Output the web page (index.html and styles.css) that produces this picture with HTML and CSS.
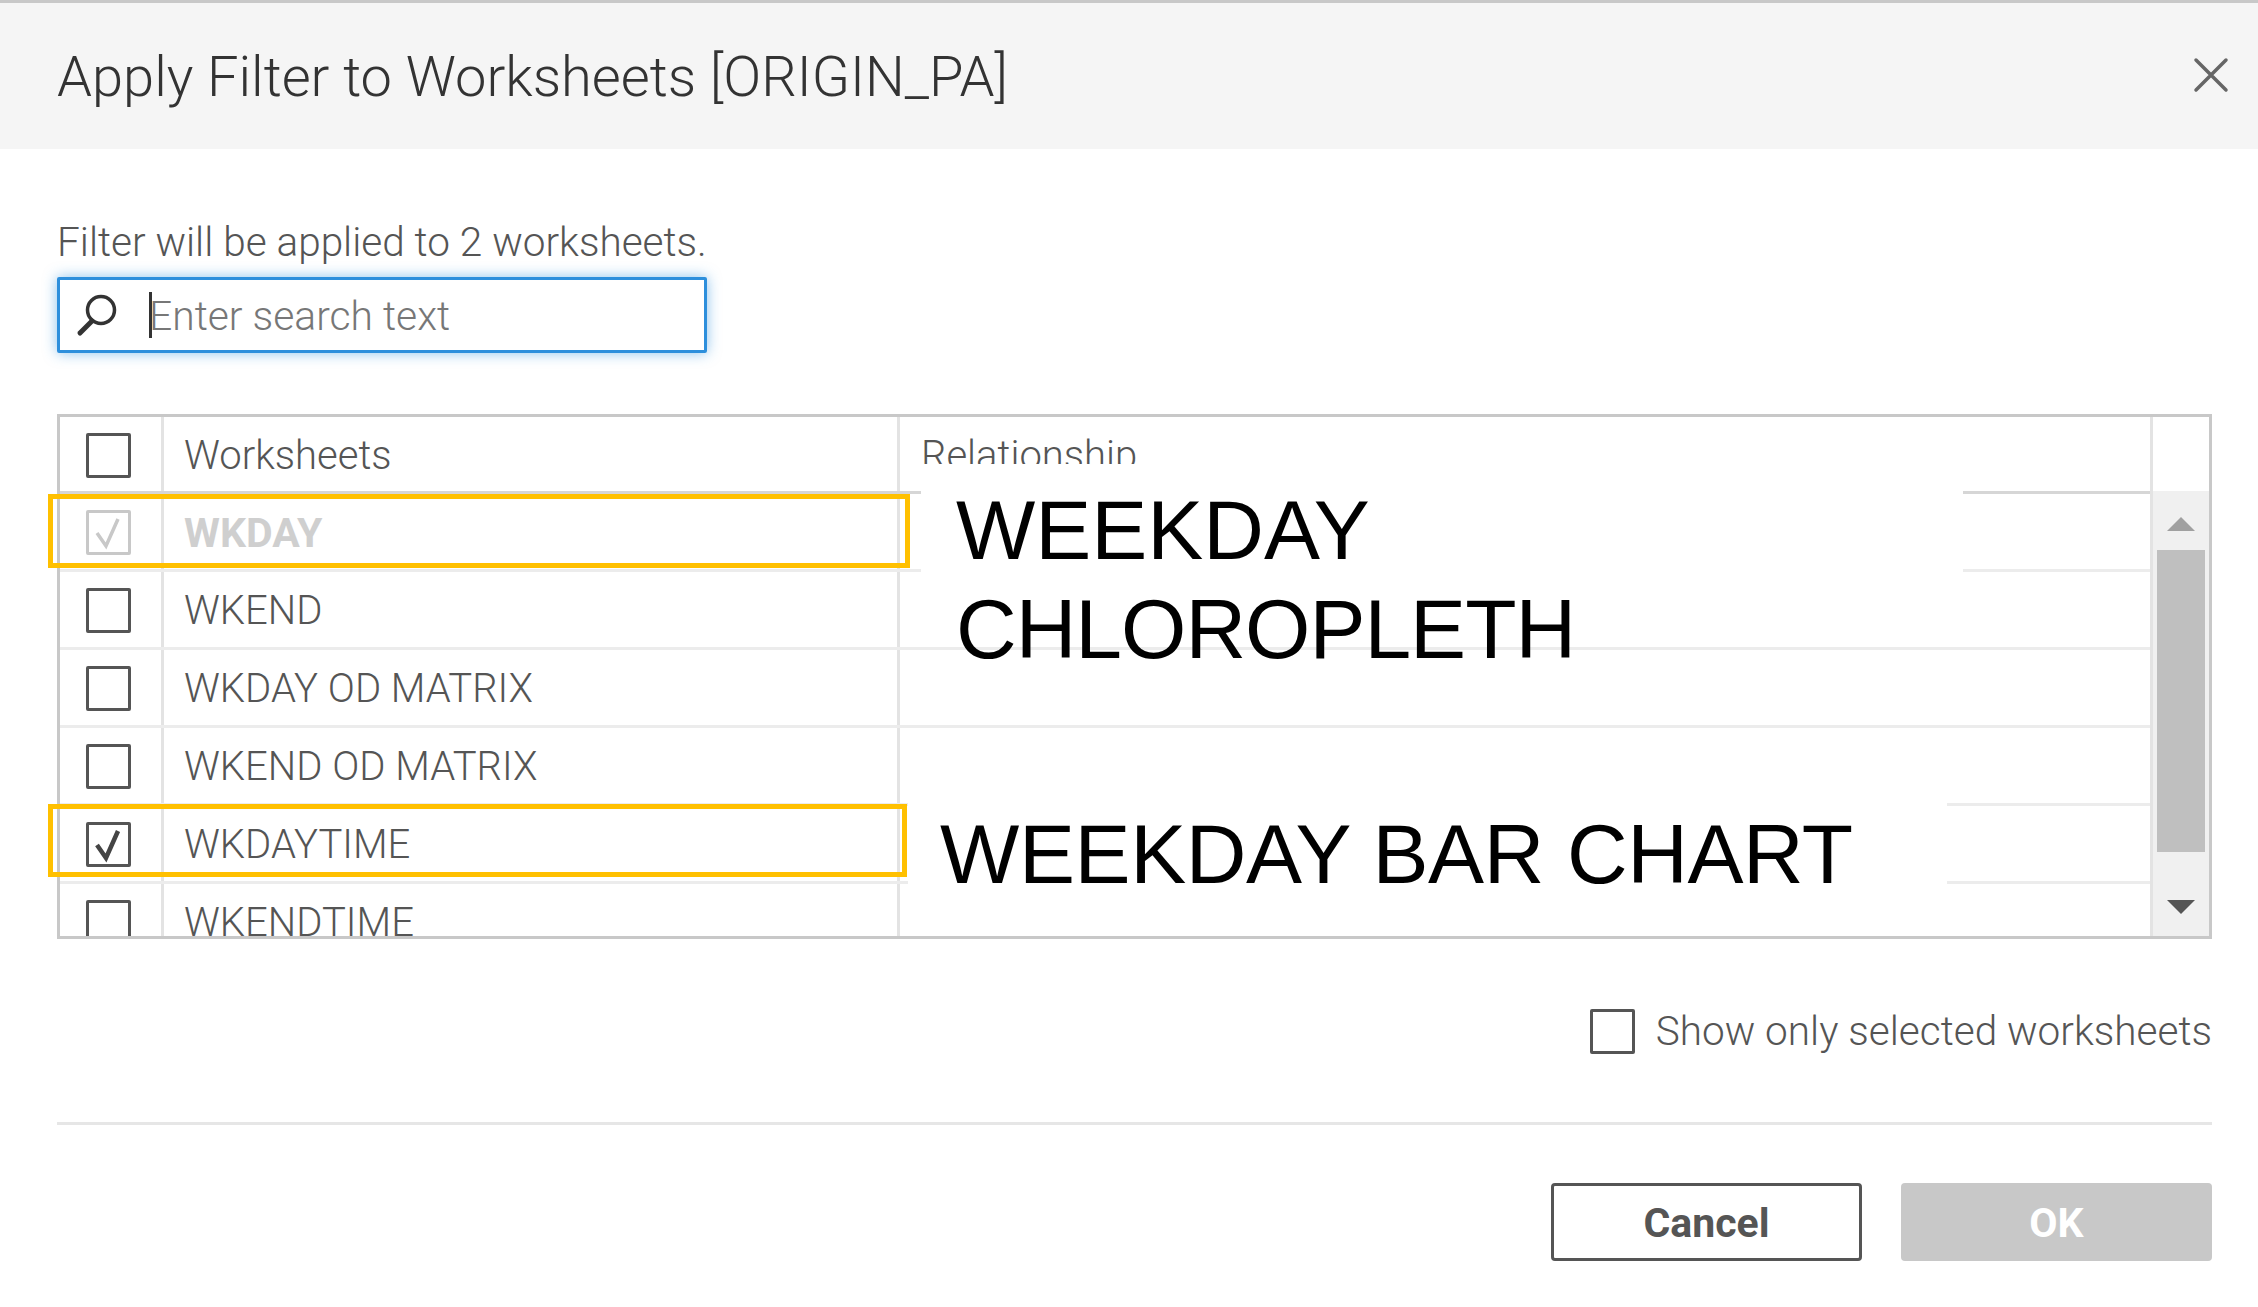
FILE: index.html
```html
<!DOCTYPE html>
<html lang="en">
  <head>
    <meta charset="UTF-8" />
    <title>Apply Filter to Worksheets</title>
    <link rel="stylesheet" href="styles.css">
  </head>
  <body>
    <div class="dialog">
      <div class="header">
        <h1>Apply Filter to Worksheets [ORIGIN_PA]</h1>
        <svg class="close" width="36" height="36" viewBox="0 0 36 36"><path d="M3 3L33 33M33 3L3 33" stroke="#666" stroke-width="3.5" stroke-linecap="round" fill="none"/></svg>
      </div>

      <div class="content">
        <p class="note">Filter will be applied to 2 worksheets.</p>
        <div class="search">
          <svg class="search-icon" width="44" height="48" viewBox="0 0 44 48"><circle cx="26" cy="19" r="13.5" stroke="#333" stroke-width="3.5" fill="none"/><path d="M17 30L5 42" stroke="#333" stroke-width="5" stroke-linecap="round"/></svg>
          <span class="caret"></span>
          <span class="placeholder">Enter search text</span>
        </div>

        <div class="sheets">
          <div class="rows">
            <div class="row head">
              <div class="cell-check"><span class="box"></span></div>
              <div class="cell-name">Worksheets</div>
              <div class="cell-rel">Relationship</div>
            </div>
            <div class="row disabled">
              <div class="cell-check">
                <span class="box"><svg width="39" height="39" viewBox="0 0 39 39"><path d="M8 20L17 33L29 6" stroke="#c8c8c8" stroke-width="3.5" fill="none"/></svg></span>
              </div>
              <div class="cell-name">WKDAY</div>
              <div class="cell-rel"></div>
            </div>
            <div class="row">
              <div class="cell-check"><span class="box"></span></div>
              <div class="cell-name">WKEND</div>
              <div class="cell-rel"></div>
            </div>
            <div class="row">
              <div class="cell-check"><span class="box"></span></div>
              <div class="cell-name">WKDAY OD MATRIX</div>
              <div class="cell-rel"></div>
            </div>
            <div class="row">
              <div class="cell-check"><span class="box"></span></div>
              <div class="cell-name">WKEND OD MATRIX</div>
              <div class="cell-rel"></div>
            </div>
            <div class="row">
              <div class="cell-check">
                <span class="box"><svg width="39" height="39" viewBox="0 0 39 39"><path d="M8 20L17 33L29 6" stroke="#444" stroke-width="4.5" fill="none"/></svg></span>
              </div>
              <div class="cell-name">WKDAYTIME</div>
              <div class="cell-rel"></div>
            </div>
            <div class="row">
              <div class="cell-check"><span class="box"></span></div>
              <div class="cell-name">WKENDTIME</div>
              <div class="cell-rel"></div>
            </div>
          </div>

          <div class="scroll">
            <div class="scroll-top"></div>
            <div class="track">
              <span class="arrow-up"></span>
              <span class="thumb"></span>
              <span class="arrow-down"></span>
            </div>
          </div>
        </div>

        <label class="only">
          <span class="box"></span>
          <span>Show only selected worksheets</span>
        </label>

        <div class="footer">
          <button class="btn cancel">Cancel</button>
          <button class="btn ok">OK</button>
        </div>
      </div>

      <!-- annotations pasted on top of the screenshot -->
      <div class="patch patch-one"></div>
      <div class="patch patch-two"></div>
      <div class="mark mark-one"></div>
      <div class="mark mark-two"></div>
      <div class="label label-one">WEEKDAY<br /><span class="tight">CHLOROPLETH</span></div>
      <div class="label label-two">WEEKDAY BAR CHART</div>
    </div>
  </body>
</html>
```

FILE: styles.css
```css
* {
  box-sizing: border-box;
}

html,
body {
  margin: 0;
  padding: 0;
  background: #fff;
}

.dialog {
  position: relative;
  width: 2258px;
  height: 1307px;
  overflow: hidden;
  font-family: "Roboto", "Liberation Sans", sans-serif;
  font-weight: 300;
  color: #555;
}

.header {
  display: flex;
  align-items: center;
  justify-content: space-between;
  height: 149px;
  padding: 0 29px 0 57px;
  background: #f5f5f5;
  border-top: 3px solid #c8c8c8;
}

.header h1 {
  margin: 0;
  padding-top: 2px;
  font-size: 56px;
  font-weight: 300;
  color: #333;
}

.close {
  margin-top: -2px;
}

.content {
  padding: 68px 46px 0 57px;
}

.note {
  margin: 0;
  height: 60px;
  padding-top: 2px;
  line-height: 46px;
  font-size: 40.5px;
}

.search {
  display: flex;
  align-items: center;
  width: 650px;
  height: 76px;
  padding-left: 15px;
  border: 3px solid #2d8fdc;
  border-radius: 2px;
  box-shadow: 0 0 14px rgba(45, 143, 220, 0.55);
}

.search-icon {
  flex: none;
}

.caret {
  flex: none;
  width: 3px;
  height: 46px;
  margin-left: 30px;
  background: #333;
}

.placeholder {
  margin-left: -3px;
  padding-top: 2px;
  font-size: 40.8px;
  color: #777;
}

.sheets {
  display: flex;
  height: 525px;
  margin-top: 61px;
  border: 3px solid #c8c8c8;
}

.rows {
  flex: 1;
  overflow: hidden;
}

.row {
  display: flex;
  height: 78px;
  border-bottom: 3px solid #ececec;
  font-size: 40px;
}

.row.head {
  height: 77px;
  border-bottom-color: #d6d6d6;
}

.cell-check {
  display: flex;
  align-items: center;
  justify-content: center;
  flex: none;
  width: 104px;
  padding: 2px 4px 0 0;
  border-right: 3px solid #e3e3e3;
}

.cell-name {
  display: flex;
  align-items: center;
  flex: none;
  width: 736px;
  padding: 2px 0 0 20px;
  border-right: 3px solid #e3e3e3;
}

.cell-rel {
  display: flex;
  align-items: center;
  flex: 1;
  padding: 2px 0 0 21px;
}

.box {
  display: flex;
  flex: none;
  width: 45px;
  height: 45px;
  border: 3px solid #555;
  border-radius: 2px;
}

.disabled .box {
  border-color: #c8c8c8;
}

.disabled .cell-name {
  font-size: 41px;
  font-weight: 700;
  color: #cfcfcf;
}

.scroll {
  display: flex;
  flex-direction: column;
  flex: none;
  width: 59px;
  border-left: 3px solid #e3e3e3;
}

.scroll-top {
  flex: none;
  height: 74px;
}

.track {
  display: flex;
  flex-direction: column;
  align-items: center;
  flex: 1;
  padding: 26px 0 0;
  background: #f0f0f0;
}

.thumb {
  width: 48px;
  height: 302px;
  margin: 19px 0 48px;
  background: #bfbfbf;
}

.arrow-up {
  width: 0;
  height: 0;
  border-left: 14px solid transparent;
  border-right: 14px solid transparent;
  border-bottom: 14px solid #a0a0a0;
}

.arrow-down {
  width: 0;
  height: 0;
  border-left: 14px solid transparent;
  border-right: 14px solid transparent;
  border-top: 14px solid #555;
}

.only {
  display: flex;
  align-items: center;
  justify-content: flex-end;
  gap: 21px;
  margin-top: 68px;
  font-size: 40.5px;
}

.footer {
  display: flex;
  justify-content: flex-end;
  gap: 39px;
  margin-top: 67px;
  padding-top: 58px;
  border-top: 3px solid #e6e6e6;
}

.btn {
  width: 311px;
  height: 78px;
  padding-top: 2px;
  border-radius: 4px;
  font-family: inherit;
  font-size: 41px;
  font-weight: 700;
}

.cancel {
  background: #fff;
  border: 3px solid #555;
  color: #555;
}

.ok {
  background: #c8c8c8;
  border: 0;
  color: #fff;
}

.patch {
  position: absolute;
  background: #fff;
}

.patch-one {
  left: 921px;
  top: 464px;
  width: 1042px;
  height: 126px;
}

.patch-two {
  left: 908px;
  top: 798px;
  width: 1039px;
  height: 92px;
}

.mark {
  position: absolute;
  border: 5px solid #ffc000;
}

.mark-one {
  left: 48px;
  top: 494px;
  width: 862px;
  height: 74px;
}

.mark-two {
  left: 48px;
  top: 804px;
  width: 859px;
  height: 73px;
}

.label {
  position: absolute;
  font-family: "Liberation Sans", Arial, sans-serif;
  font-weight: 400;
  font-size: 84px;
  line-height: 99px;
  color: #000;
}

.label-one {
  left: 956px;
  top: 481px;
}

.tight {
  letter-spacing: -1px;
}

.label-two {
  left: 940px;
  top: 805px;
  letter-spacing: -0.4px;
  white-space: nowrap;
}
```
